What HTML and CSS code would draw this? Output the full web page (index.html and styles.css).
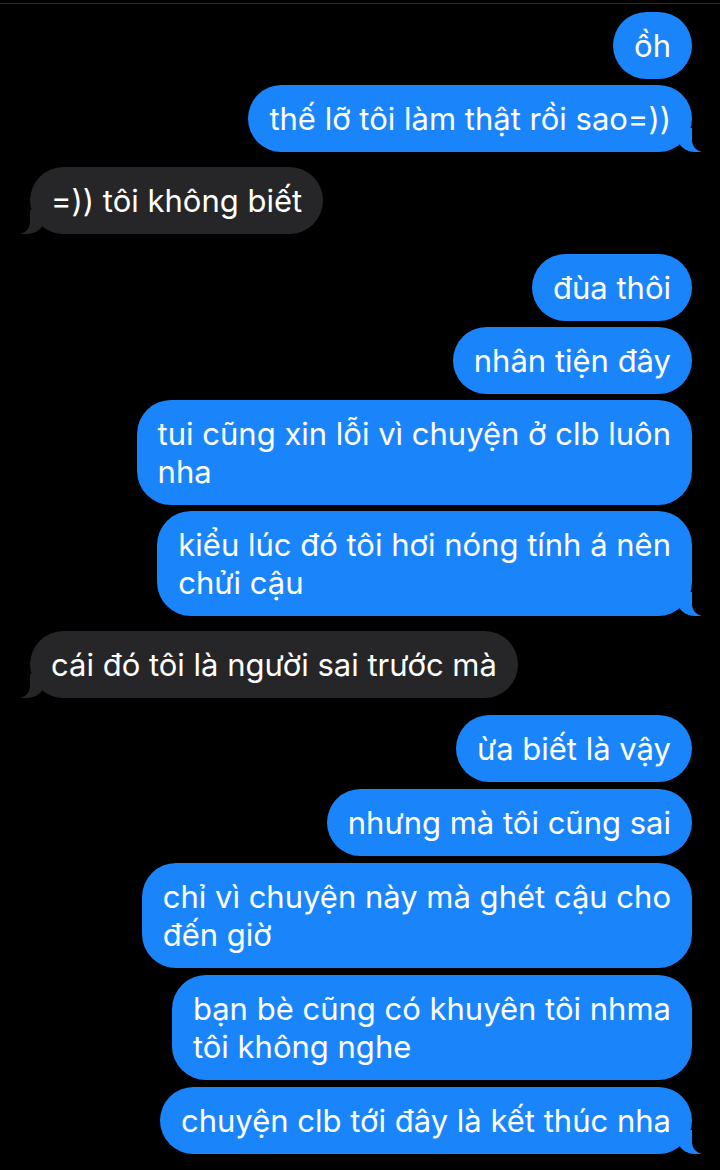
FILE: index.html
```html
<!DOCTYPE html>
<html lang="vi">
<head>
<meta charset="utf-8">
<title>Tin nhắn</title>
<link rel="stylesheet" href="styles.css">
</head>
<body>

<div class="thread">

	<div class="run me">
		<div class="msg">ồh</div>
		<div class="msg tail">thế lỡ tôi làm thật rồi sao=))</div>
	</div>

	<div class="run them">
		<div class="msg tail">=)) tôi không biết</div>
	</div>

	<div class="run me after-pause">
		<div class="msg">đùa thôi</div>
		<div class="msg">nhân tiện đây</div>
		<div class="msg">tui cũng xin lỗi vì chuyện ở clb luôn<br>nha</div>
		<div class="msg tail">kiểu lúc đó tôi hơi nóng tính á nên<br>chửi cậu</div>
	</div>

	<div class="run them">
		<div class="msg tail">cái đó tôi là người sai trước mà</div>
	</div>

	<div class="run me loose">
		<div class="msg">ừa biết là vậy</div>
		<div class="msg">nhưng mà tôi cũng sai</div>
		<div class="msg">chỉ vì chuyện này mà ghét cậu cho<br>đến giờ</div>
		<div class="msg">bạn bè cũng có khuyên tôi nhma<br>tôi không nghe</div>
		<div class="msg tail">chuyện clb tới đây là kết thúc nha</div>
	</div>

</div>

</body>
</html>
```

FILE: styles.css
```css
body {
	margin: 0;
	background: #000;
	font-family: Inter, "Liberation Sans", sans-serif;
	-webkit-font-smoothing: antialiased;
}
.thread {
	border-top: 1px solid #2c2c2e;
	margin-top: 3px;
	padding: 8px 28px 0 30px;
	display: flex;
	flex-direction: column;
}

.run {
	display: flex;
	flex-direction: column;
	gap: 6px;
	margin-top: 16px;
}
.run:first-child { margin-top: 0; }
.run.them { margin-top: 15px; }
.run.after-pause { margin-top: 20px; }
.run.loose {
	gap: 7px;
	margin-top: 17px;
}
.run.me { align-items: flex-end; }
.run.them { align-items: flex-start; }

.msg {
	position: relative;
	width: fit-content;
	font-size: 31px;
	line-height: 38px;
	color: #fff;
	padding: 15px 21px 14px;
	border-radius: 34px;
}
.me .msg { background: #1a85fb; }
.them .msg { background: #262628; }

/* the little curl under the last bubble of a run */
.msg.tail::before,
.msg.tail::after {
	content: "";
	position: absolute;
	bottom: 0;
	height: 24px;
}
.me .tail::before {
	right: -9px;
	width: 24px;
	background: #1a85fb;
	border-bottom-left-radius: 18px 16px;
}
.me .tail::after {
	right: -14px;
	width: 14px;
	background: #000;
	border-bottom-left-radius: 12px;
}
.them .tail::before {
	left: -9px;
	width: 24px;
	background: #262628;
	border-bottom-right-radius: 18px 16px;
}
.them .tail::after {
	left: -14px;
	width: 14px;
	background: #000;
	border-bottom-right-radius: 12px;
}
```
